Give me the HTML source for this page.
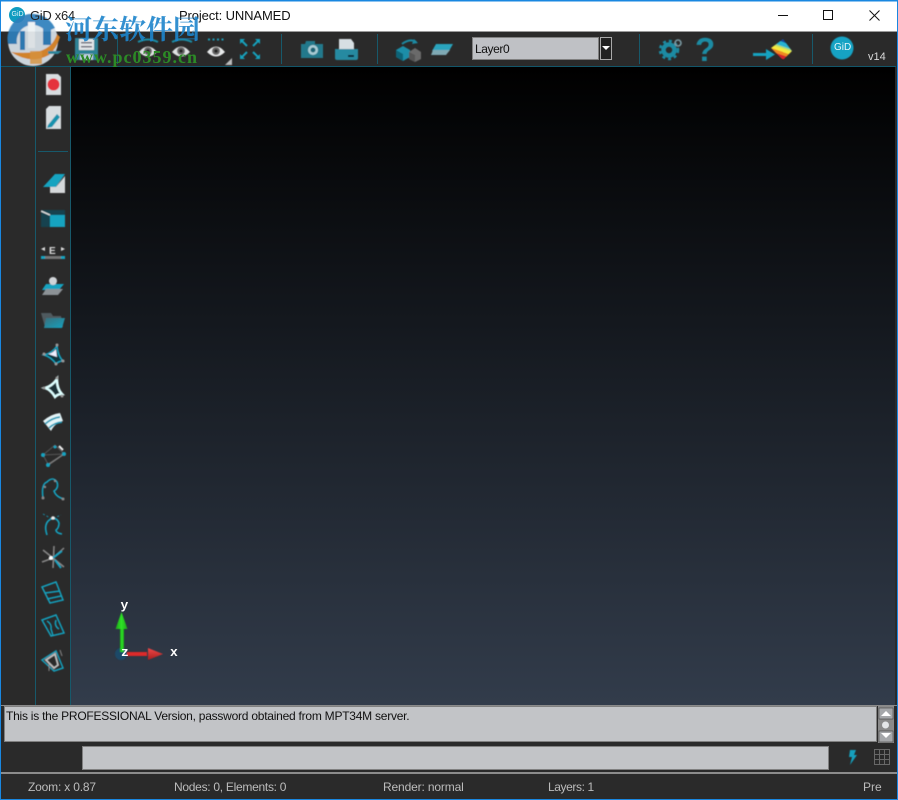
<!DOCTYPE html>
<html><head><meta charset="utf-8">
<style>
html,body{margin:0;padding:0;background:#2a2a2a}
#w{position:relative;width:898px;height:800px;overflow:hidden;background:#2a2a2a;font-family:"Liberation Sans",sans-serif;font-size:12px}
.a{position:absolute}
.t{position:absolute;white-space:nowrap;line-height:14px}
svg{position:absolute;left:0;top:0}
</style></head><body>
<div id="w">
<div class="a" style="left:0;top:0;width:898px;height:31px;background:#fff"></div>
<div class="a" style="left:0;top:31px;width:898px;height:1px;background:#9a9a9a"></div>
<div class="a" style="left:71px;top:67px;width:824px;height:638px;background:linear-gradient(#000 0%,#323c4b 100%)"></div>
<div class="a" style="left:0;top:705px;width:898px;height:1px;background:#8a8a8a"></div>
<div class="a" style="left:0;top:706px;width:898px;height:66px;background:#2a2a2a"></div>
<div class="a" style="left:4px;top:706px;width:873px;height:36px;background:#c2c4c7;border:1px solid #808080;box-sizing:border-box"></div>
<div class="a" style="left:82px;top:746px;width:747px;height:24px;background:#c2c4c7;border:1px solid #808080;box-sizing:border-box"></div>
<div class="a" style="left:1px;top:772px;width:896px;height:2px;background:#8c8c8c"></div>
<div class="a" style="left:472px;top:37px;width:127px;height:23px;background:#bfc1c5;border:1px solid #808080;box-sizing:border-box"></div>
<div class="a" style="left:600px;top:37px;width:12px;height:23px;background:#222;border:1px solid #aaa;box-sizing:border-box"></div>

<svg width="898" height="800" viewBox="0 0 898 800">
<defs>
<linearGradient id="rb" x1=".72" y1="0" x2=".38" y2="1">
<stop offset="0" stop-color="#17459c"/><stop offset=".18" stop-color="#17459c"/><stop offset=".18" stop-color="#26b3d2"/><stop offset=".36" stop-color="#26b3d2"/><stop offset=".36" stop-color="#7fd0a0"/><stop offset=".48" stop-color="#f6ea3c"/><stop offset=".6" stop-color="#f6ea3c"/><stop offset=".6" stop-color="#f08a22"/><stop offset=".74" stop-color="#f08a22"/><stop offset=".74" stop-color="#d8232a"/><stop offset=".9" stop-color="#d8232a"/><stop offset=".9" stop-color="#111"/><stop offset="1" stop-color="#111"/></linearGradient>
<linearGradient id="fl" x1="0" y1="0" x2="1" y2="1"><stop offset="0" stop-color="#3a6f7b"/><stop offset="1" stop-color="#14a2c0"/></linearGradient>
<linearGradient id="gr" x1="0" y1="0" x2="1" y2="0"><stop offset="0" stop-color="#1fa31a"/><stop offset=".5" stop-color="#2ee526"/><stop offset="1" stop-color="#1fa31a"/></linearGradient>
<linearGradient id="rd" x1="0" y1="0" x2="0" y2="1"><stop offset="0" stop-color="#f04848"/><stop offset="1" stop-color="#a81f1f"/></linearGradient>
<filter id="b" x="-5%" y="-5%" width="110%" height="110%"><feGaussianBlur stdDeviation=".4"/></filter>
</defs>
<!-- frame -->
<rect x="0" y="0" width="898" height="1.5" fill="#1987e0"/>
<rect x="0" y="0" width="1" height="800" fill="#1987e0"/>
<rect x="897" y="0" width="1" height="800" fill="#1987e0"/>
<rect x="0" y="799" width="898" height="1" fill="#1987e0"/>
<!-- teal lines -->
<rect x="1" y="66" width="895" height="1" fill="#12566a"/>
<rect x="35" y="67" width="1" height="638" fill="#17596b"/>
<rect x="70" y="67" width="1" height="638" fill="#17596b"/>
<rect x="38" y="151" width="30" height="1" fill="#17596b"/>
<rect x="117" y="34" width="1" height="30" fill="#17596b"/>
<rect x="281" y="34" width="1" height="30" fill="#17596b"/>
<rect x="377" y="34" width="1" height="30" fill="#17596b"/>
<rect x="639" y="34" width="1" height="30" fill="#17596b"/>
<rect x="812" y="34" width="1" height="30" fill="#17596b"/>
<!-- title logo -->
<circle cx="17" cy="15" r="8" fill="#0f9cc0"/>
<!-- window controls -->
<rect x="778" y="15" width="10" height="1" fill="#111"/>
<rect x="823.500" y="10.500" width="9" height="9" fill="none" stroke="#111"/>
<path d="M869.500 10.500l10 10M879.500 10.500l-10 10" stroke="#111" fill="none"/>

<g filter="url(#b)">
<!-- save icon -->
<path d="M75 38h23v22H75z" fill="#2f8296"/><rect x="79" y="39" width="15" height="11" fill="#e2e6e8"/><rect x="81" y="42" width="11" height="1.500" fill="#667"/><rect x="81" y="46" width="11" height="1.500" fill="#667"/><rect x="80" y="54" width="13" height="6" fill="#bcd"/>
<!-- eyes -->
<path d="M139 52q9-11 18 0q-9 9-18 0z" fill="#dfe2e3"/><circle cx="148" cy="51" r="4" fill="#666"/><circle cx="148" cy="51" r="1.800" fill="#222"/>
<path d="M138 42q10-5 20 0" stroke="#1a8ea6" stroke-width="2" fill="none"/>
<path d="M172 52q9-11 18 0q-9 9-18 0z" fill="#dfe2e3"/><circle cx="181" cy="51" r="4" fill="#666"/><circle cx="181" cy="51" r="1.800" fill="#222"/>
<path d="M172 42q10-5 20 0" stroke="#1a8ea6" stroke-width="2" fill="none"/>
<path d="M207 52q9-11 18 0q-9 9-18 0z" fill="#e8eaeb"/><circle cx="216" cy="51" r="4" fill="#666"/><circle cx="216" cy="51" r="1.800" fill="#222"/>
<path d="M208 39.500h17" stroke="#1a9cb8" stroke-width="2" stroke-dasharray="2 2.500" fill="none"/>
<path d="M232 58v7h-7z" fill="#bbb"/>
<!-- fit arrows -->
<g fill="#12a0bc" stroke="#12a0bc"><path d="M240 39h5l-5 5zM260 39h-5l5 5zM240 59h5l-5-5zM260 59h-5l5-5z" stroke="none"/><path d="M242 41l5 5M258 41l-5 5M242 57l5-5M258 57l-5-5" stroke-width="2" fill="none"/></g>
<!-- camera -->
<path d="M301 44h4l1-3h9v3h8v14h-22z" fill="#20798c"/><circle cx="313" cy="50" r="5" fill="#a9ccd5"/><circle cx="313" cy="50" r="2.500" fill="#1c6576"/>
<!-- printer -->
<path d="M339 39h12l3 4v8h-15z" fill="#d7dfe3"/><path d="M335 49h23v9a2 2 0 0 1-2 2h-19a2 2 0 0 1-2-2z" fill="#258aa1"/><rect x="348" y="55" width="6" height="2" fill="#123"/>
<!-- layers/cubes -->
<path d="M402 44q8-6 14-2" stroke="#1b8aa3" stroke-width="2" fill="none"/><path d="M414 39l4 4-6 1z" fill="#1b8aa3"/>
<path d="M396 50l7-4 7 4v7l-7 4-7-4z" fill="#1d8ea8"/><path d="M396 50l7 4v7l-7-4z" fill="#0f6377"/>
<path d="M409 52l6-4 6 4v7l-6 3-6-3z" fill="#6a6a6a"/><path d="M409 52l6 3v7l-6-3z" fill="#555"/>
<path d="M436 44h17l-4 7h-17z" fill="#2aa4bd"/><path d="M433 50h17l-4 5h-15z" fill="#7fa9b4"/>
<!-- gears -->
<circle cx="669" cy="50" r="5.500" fill="none" stroke="#1b8ba3" stroke-width="4.500"/><circle cx="669" cy="50" r="9" fill="none" stroke="#1b8ba3" stroke-width="2.500" stroke-dasharray="3 3"/>
<circle cx="678" cy="43" r="3" fill="none" stroke="#7a9aa3" stroke-width="1.600"/>
<!-- help -->
<text x="695" y="61" font-family="Liberation Sans,sans-serif" font-size="33" font-weight="bold" fill="#1b8ba3">?</text>
<!-- arrow + rainbow -->
<rect x="753" y="53" width="14" height="3" fill="#14a2c0"/><path d="M766 49l9 5.500-9 5.500z" fill="#14a2c0"/>
<path d="M771 48l12-9 9 12-9 9z" fill="url(#rb)"/>
<!-- GiD circle -->
<circle cx="842" cy="48" r="11.500" fill="#13a3c4"/>

<!-- side icons -->
<path d="M46 74h12l3 3v18H46z" fill="#d8dde0"/><circle cx="53.500" cy="84.500" r="6" fill="#e5303c"/>
<path d="M46 109l3-3h12v23H46z" fill="#d8dde0"/><path d="M48 125l9-11 3 3-8 10-5 1z" fill="#1792ad"/>

<path d="M43 187l12-13h10l-9 13z" fill="#14a3c0"/><path d="M56 187l9-11v17H50v-6z" fill="#d5d8da"/>
<rect x="41" y="210" width="24" height="17" fill="#17434f"/><rect x="50" y="215" width="15" height="12" fill="#14a3c0"/><path d="M41 211l9 4" stroke="#e2e2e2" stroke-width="1.500"/>
<path d="M41 249l4-2v4zM65 249l-4-2v4z" fill="#ddd"/>
<text x="49" y="254" font-family="Liberation Sans,sans-serif" font-size="10" font-weight="bold" fill="#ddd">E</text>
<rect x="41" y="256" width="24" height="3" fill="#777"/><rect x="41" y="256" width="4" height="3" fill="#14a3c0"/><rect x="61" y="256" width="4" height="3" fill="#14a3c0"/>
<path d="M46 284h18l-5 6H42z" fill="#14a3c0"/><path d="M46 289h17l-5 6H42z" fill="#8c9296"/><circle cx="53" cy="281" r="4" fill="#d0d4d8"/>
<path d="M41 313h10l2 3h8l2 11H45z" fill="#4f5a5e"/><path d="M46 318h19l-3 10H44z" fill="url(#fl)"/>

<!-- surfaces -->
<path d="M44 355q8-2 13-9q1 10 6 15q-4 0-7 3q-5-7-12-9z" fill="#0e3440" stroke="#14a3c0" stroke-width="1.500"/><path d="M48 354q5-1 8-5l1 8z" fill="#eef"/>
<circle cx="57" cy="345" r="1.500" fill="#999"/><circle cx="44" cy="354" r="1.500" fill="#999"/><circle cx="63" cy="361" r="1.500" fill="#999"/><circle cx="56" cy="364" r="1.500" fill="#999"/>
<path d="M45 388q7-2 12-9q0 10 5 15q-4 0-7 3q-4-7-10-9z" fill="#1e3038" stroke="#dff" stroke-width="2.500"/><circle cx="57" cy="378" r="1.500" fill="#999"/><circle cx="44" cy="388" r="1.500" fill="#999"/><circle cx="62" cy="396" r="1.500" fill="#999"/>
<path d="M43 421q8-7 17-8l3 8q-8 2-12 10z" fill="#e4f4f7"/><path d="M45 424q7-6 15-7M49 428q5-5 13-6" stroke="#1a9ab6" stroke-width="1.700" fill="none"/>
<!-- lines -->
<g stroke="#555" fill="none"><path d="M43 455l21-1-16 10zM43 455l12-10 9 9"/></g>
<path d="M48 465l16-11" stroke="#7a7a7a" stroke-width="1.500"/>
<circle cx="43" cy="455" r="2" fill="#14a3c0"/><circle cx="64" cy="454" r="2" fill="#14a3c0"/><circle cx="48" cy="465" r="2" fill="#14a3c0"/><circle cx="55" cy="447" r="1.500" fill="#14a3c0"/>
<path d="M59 446l4 4" stroke="#eee" stroke-width="2"/>
<path d="M43 498q-2-14 4-16q6-6 10 0q2 6-3 9q2 6 10 8" stroke="#14a0bd" stroke-width="1.600" fill="none"/><circle cx="43" cy="498" r="1.500" fill="#888"/><circle cx="63" cy="499" r="1.500" fill="#888"/><circle cx="45" cy="487" r="1.200" fill="#888"/><circle cx="55" cy="481" r="1.200" fill="#888"/>
<path d="M47 535q-4-12 4-16q6-2 8 4q0 5-3 7q0 3 6 4" stroke="#14a0bd" stroke-width="1.600" fill="none"/><path d="M43 514l9 5 9-4" stroke="#1a8ea8" stroke-dasharray="2 2" fill="none"/><circle cx="53" cy="518" r="1.800" fill="#eee"/>
<g stroke="#888" stroke-width="1.500"><path d="M42 562l11-4 11-10M54 546l-1 22M43 550l10 8 11 9"/></g><circle cx="51" cy="558" r="2" fill="#fff"/><path d="M53 558l9-7M55 560l6 8" stroke="#14a0bd" stroke-width="2"/>
<g fill="none" stroke="#14a0bd" stroke-width="1.500"><path d="M42 587l14-5 7 18-13 3zM45 593l15-2M47 599l14-3"/>
<path d="M42 620l14-5 8 18-13 3zM47 621q5 3 4 8q1 3 2 7M56 620q-2 6 3 9"/>
<path d="M42 660l14-9 7 17-9 3z"/></g>
<path d="M46 660l9-6 3 11-4 3z" fill="none" stroke="#bbb" stroke-width="2"/><path d="M49 664v7M60 650l2 6" stroke="#888"/>

<!-- axes -->
<circle cx="121" cy="654" r="6" fill="#1a4a68"/>
<rect x="120" y="625" width="4" height="27" fill="url(#gr)"/>
<path d="M121.500 612l6 17h-12z" fill="url(#gr)"/>
<rect x="127" y="652" width="20" height="4" fill="#dd2b2b"/>
<path d="M163 654l-15 6v-12z" fill="url(#rd)"/>
<!-- bolt -->
<path d="M850 750h6l-2 5h3l-7 10 2-8h-3z" fill="#14a0bd"/>
</g>

<text x="120.500" y="609" font-family="Liberation Mono,monospace" font-size="13" font-weight="bold" fill="#fff">y</text>
<text x="121" y="656" font-family="Liberation Mono,monospace" font-size="13" font-weight="bold" fill="#fff">z</text>
<text x="170" y="656" font-family="Liberation Mono,monospace" font-size="13" font-weight="bold" fill="#fff">x</text>
<!-- dropdown arrow -->
<path d="M602 46h8l-4 4z" fill="#fff"/>
<!-- scrollbar -->
<rect x="878" y="706" width="16" height="37" fill="#8a8a8a"/>
<rect x="879" y="708" width="14" height="11" fill="#a5a7aa" stroke="#444" stroke-width=".6"/><path d="M881 716l5-5 5 5z" fill="#fff"/>
<circle cx="885.500" cy="725" r="3.500" fill="#e4e6e8"/>
<rect x="879" y="731" width="14" height="11" fill="#a5a7aa" stroke="#444" stroke-width=".6"/><path d="M881 733l5 5 5-5z" fill="#fff"/>
<!-- grid -->
<g stroke="#686868" fill="none"><rect x="874.500" y="749.500" width="15" height="15"/><path d="M879.500 750v15M884.500 750v15M875 754.500h15M875 759.500h15"/></g>

<!-- watermark logo -->
<g filter="url(#b)" opacity=".92">
<circle cx="33" cy="41" r="25" fill="#d9e3ea"/>
<path d="M8 44a25 25 0 0 1 47-16l-9 4a16 16 0 0 0-29 12z" fill="#2d7fbc"/>
<path d="M11 52q20 13 38 3q8-7 11-18l-3-3q-4 13-17 17q-13 3-29 1z" fill="#e08a2c"/>
<path d="M20 31h5v19h-5zM43 23h8v22h-8z" fill="#2d7fbc"/>
<path d="M28 22h7v26h-7z" fill="#ecf1f4"/>
<path d="M30 51h12v13h-12z" fill="#e59a3e" fill-opacity=".8"/>
<path d="M48 51h14l-4 3h-10z" fill="#2e8ea5"/>
</g>
</svg>

<div class="t" style="left:30px;top:9px;font-size:13px;letter-spacing:-.3px;color:#222">GiD x64</div>
<div class="t" style="left:179px;top:9px;font-size:13px;letter-spacing:-.12px;color:#111">Project: UNNAMED</div>
<div class="t" style="left:11.500px;top:11px;font-size:7px;line-height:8px;color:#e4f6fb">GiD</div>
<div class="t" style="left:475px;top:42px;font-size:12px;letter-spacing:-.4px;color:#111">Layer0</div>
<div class="t" style="left:834px;top:42px;font-size:10px;line-height:12px;color:#e8f6fa">GiD</div>
<div class="t" style="left:868px;top:50px;font-size:11px;color:#d8d8d8">v14</div>
<div class="t" style="left:6px;top:709px;font-size:12px;letter-spacing:-.24px;color:#111">This is the PROFESSIONAL Version, password obtained from MPT34M server.</div>
<div class="t" style="left:28px;top:780px;font-size:12px;letter-spacing:-.18px;color:#bcbcbc">Zoom: x 0.87</div>
<div class="t" style="left:174px;top:780px;font-size:12px;letter-spacing:-.28px;color:#bcbcbc">Nodes: 0, Elements: 0</div>
<div class="t" style="left:383px;top:780px;font-size:12px;letter-spacing:-.15px;color:#bcbcbc">Render: normal</div>
<div class="t" style="left:548px;top:780px;font-size:12px;letter-spacing:-.4px;color:#bcbcbc">Layers: 1</div>
<div class="t" style="left:863px;top:780px;font-size:12px;color:#bcbcbc">Pre</div>
<div class="t" style="left:65px;top:13px;font-family:'Liberation Serif','Noto Serif CJK SC',serif;font-size:27px;line-height:34px;font-weight:bold;color:#1d85cc;opacity:.9">河东软件园</div>
<div class="t" style="left:66px;top:48px;font-family:'Liberation Serif',serif;font-size:18px;line-height:18px;font-weight:bold;letter-spacing:1px;color:#2c8a26">www.pc0359.cn</div>
</div>
</body></html>
